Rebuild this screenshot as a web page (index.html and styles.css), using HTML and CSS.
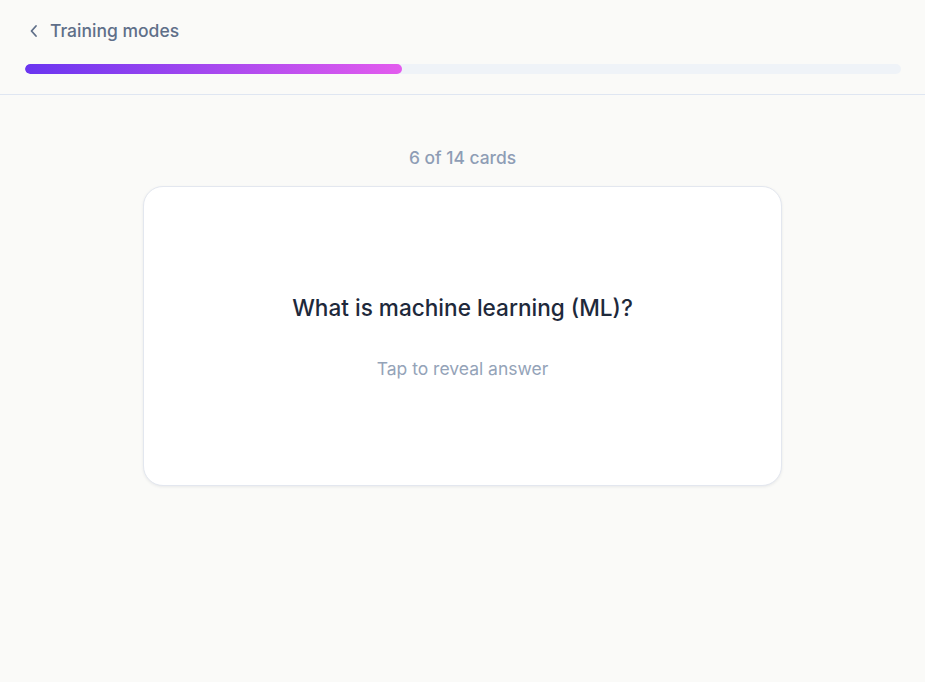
FILE: index.html
```html
<!DOCTYPE html>
<html lang="en">
<head>
<meta charset="utf-8">
<title>Training</title>
<link rel="stylesheet" href="styles.css">
</head>
<body>
<header class="topbar">
  <a class="back" href="#">
    <svg class="chev" width="10" height="14" viewBox="0 0 10 14" aria-hidden="true"><path d="M7 2 L2.5 7 L7 12" fill="none" stroke="currentColor" stroke-width="1.8" stroke-linecap="round" stroke-linejoin="round"/></svg>
    <span>Training modes</span>
  </a>
  <div class="progress"><div class="progress-fill" style="width:43%"></div></div>
</header>
<main class="main">
  <div class="counter">6 of 14 cards</div>
  <div class="card">
    <div class="question">What is machine learning (ML)?</div>
    <div class="hint">Tap to reveal answer</div>
  </div>
</main>
</body>
</html>
```

FILE: styles.css
```css
* { box-sizing: border-box; }
html, body { margin: 0; padding: 0; }
body {
  background: #fafaf8;
  font-family: Inter, "Noto Sans", sans-serif;
  min-height: 682px;
}
.topbar {
  padding: 19px 24px 20px 25px;
  border-bottom: 1px solid #dfe6f2;
}
.back {
  display: inline-flex;
  align-items: center;
  gap: 11px;
  color: #5f6f89;
  text-decoration: none;
  font-size: 17.5px;
  font-weight: 500;
  line-height: 24px;
  padding-left: 4px;
}
.chev { display: block; }
.progress {
  margin-top: 21px;
  height: 10px;
  border-radius: 5px;
  background: #eff3f8;
  overflow: hidden;
}
.progress-fill {
  height: 100%;
  border-radius: 5px;
  background: linear-gradient(to right, #6a35f0, #e35cee);
}
.main {
  display: flex;
  flex-direction: column;
  align-items: center;
  padding-top: 51px;
}
.counter {
  font-size: 17.4px;
  line-height: 24px;
  font-weight: 500;
  color: #8e9db5;
}
.card {
  margin-top: 16px;
  width: 639px;
  height: 300px;
  padding-top: 3px;
  background: #fff;
  border: 1px solid #e3e7ef;
  border-radius: 20px;
  box-shadow: 0 1px 3px rgba(30, 41, 59, 0.08);
  display: flex;
  flex-direction: column;
  align-items: center;
  justify-content: center;
  gap: 33px;
}
.question {
  font-size: 22.6px;
  line-height: 30px;
  font-weight: 500;
  color: #1e293b;
}
.hint {
  font-size: 17.5px;
  line-height: 26px;
  color: #94a3b8;
}
```
